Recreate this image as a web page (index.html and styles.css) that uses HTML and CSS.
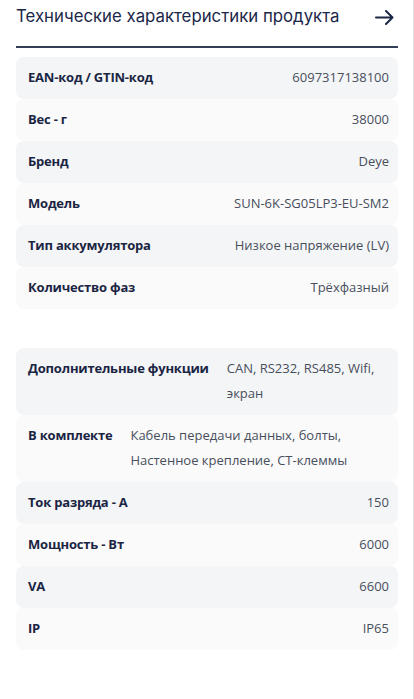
FILE: index.html
```html
<!DOCTYPE html>
<html lang="ru">
<head>
    <meta charset="UTF-8">
    <meta name="viewport" content="width=device-width, initial-scale=1.0">
    <title>Технические характеристики продукта</title>
    <link rel="stylesheet" href="styles.css">
</head>
<body>
    <div class="page">
        <div class="specs-header">
            <h2>Технические характеристики продукта</h2>
            <svg class="arrow" width="19" height="15" viewBox="0 0 19 15">
                <path d="M1 7.5 H17.5 M11 1 L17.5 7.5 L11 14" fill="none" stroke="#1d2746" stroke-width="2" stroke-linecap="round" stroke-linejoin="round"/>
            </svg>
        </div>

        <div class="spec-group">
            <div class="spec-row"><span class="spec-name">EAN-код / GTIN-код</span><span class="spec-value">6097317138100</span></div>
            <div class="spec-row"><span class="spec-name">Вес - г</span><span class="spec-value">38000</span></div>
            <div class="spec-row"><span class="spec-name">Бренд</span><span class="spec-value">Deye</span></div>
            <div class="spec-row"><span class="spec-name">Модель</span><span class="spec-value">SUN-6K-SG05LP3-EU-SM2</span></div>
            <div class="spec-row"><span class="spec-name">Тип аккумулятора</span><span class="spec-value">Низкое напряжение (LV)</span></div>
            <div class="spec-row"><span class="spec-name">Количество фаз</span><span class="spec-value">Трёхфазный</span></div>
        </div>

        <div class="spec-group">
            <div class="spec-row"><span class="spec-name">Дополнительные функции</span><span class="spec-value">CAN, RS232, RS485, Wifi, экран</span></div>
            <div class="spec-row"><span class="spec-name">В комплекте</span><span class="spec-value">Кабель передачи данных, болты, Настенное крепление, CT-клеммы</span></div>
            <div class="spec-row"><span class="spec-name">Ток разряда - A</span><span class="spec-value">150</span></div>
            <div class="spec-row"><span class="spec-name">Мощность - Вт</span><span class="spec-value">6000</span></div>
            <div class="spec-row"><span class="spec-name">VA</span><span class="spec-value">6600</span></div>
            <div class="spec-row"><span class="spec-name">IP</span><span class="spec-value">IP65</span></div>
        </div>
    </div>
</body>
</html>
```

FILE: styles.css
```css
html, body {
    margin: 0;
    padding: 0;
    background: #fff;
}
.page {
    width: 414px;
    min-height: 699px;
    border-right: 1px solid #e4e4e6;
    box-sizing: border-box;
    font-family: "Open Sans", sans-serif;
}
.specs-header {
    margin: 0 15px 0 16px;
    height: 46px;
    border-bottom: 2px solid #333d58;
    display: flex;
    align-items: flex-start;
    justify-content: space-between;
    padding-right: 4px;
}
.specs-header h2 {
    margin: 5px 0 0 0;
    font-family: Inter, sans-serif;
    font-weight: normal;
    font-size: 16.8px;
    line-height: 22px;
    color: #1b2749;
}
.arrow {
    margin-top: 10px;
}
.spec-group {
    margin: 9px 15px 0 16px;
    display: flex;
    flex-direction: column;
}
.spec-group + .spec-group {
    margin-top: 39px;
}
.spec-row {
    display: flex;
    justify-content: space-between;
    gap: 18px;
    padding: 8px 9px 9px 12px;
    line-height: 25px;
    border-radius: 8px;
    background: #fafafb;
}
.spec-row:nth-child(odd) {
    background: #f4f5f7;
}
.spec-name {
    flex-shrink: 0;
    font-weight: bold;
    font-size: 13px;
    letter-spacing: -0.2px;
    color: #1a2543;
}
.spec-value {
    font-size: 13px;
    color: #484f5c;
    text-align: left;
}
```
